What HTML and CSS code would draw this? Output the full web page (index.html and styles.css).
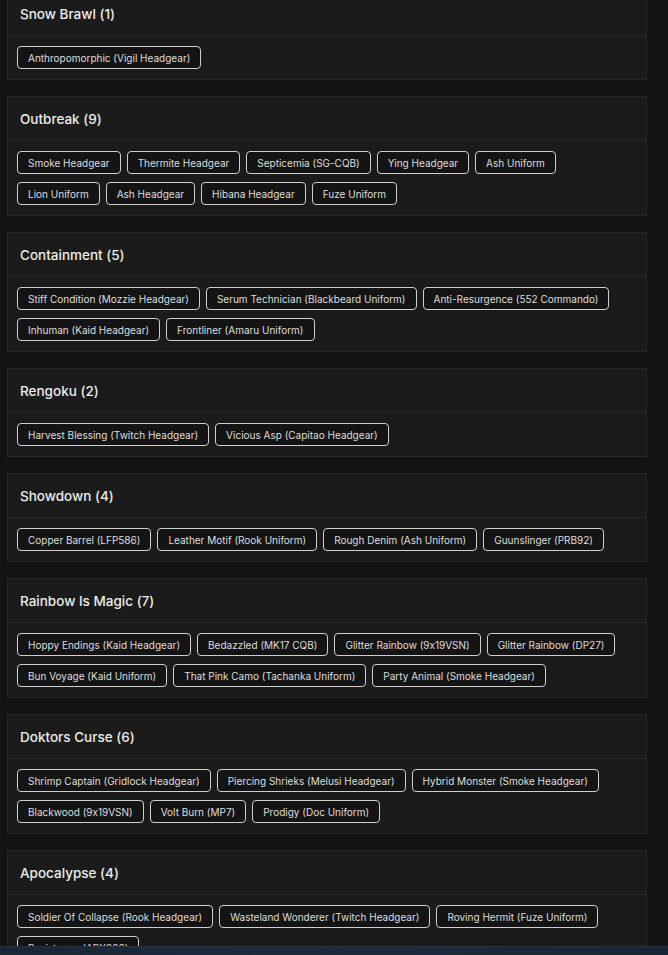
FILE: index.html
```html
<!DOCTYPE html>
<html lang="en">
<head>
    <meta charset="UTF-8">
    <meta name="viewport" content="width=device-width, initial-scale=1.0">
    <title>Event Collections</title>
    <link rel="stylesheet" href="styles.css">
</head>
<body>
    <div class="collections">
        <div class="event-card">
            <div class="event-header">Snow Brawl (1)</div>
            <div class="event-items">
                <span class="item-tag">Anthropomorphic (Vigil Headgear)</span>
            </div>
        </div>

        <div class="event-card">
            <div class="event-header">Outbreak (9)</div>
            <div class="event-items">
                <span class="item-tag">Smoke Headgear</span>
                <span class="item-tag">Thermite Headgear</span>
                <span class="item-tag">Septicemia (SG-CQB)</span>
                <span class="item-tag">Ying Headgear</span>
                <span class="item-tag">Ash Uniform</span>
                <span class="item-tag">Lion Uniform</span>
                <span class="item-tag">Ash Headgear</span>
                <span class="item-tag">Hibana Headgear</span>
                <span class="item-tag">Fuze Uniform</span>
            </div>
        </div>

        <div class="event-card">
            <div class="event-header">Containment (5)</div>
            <div class="event-items">
                <span class="item-tag">Stiff Condition (Mozzie Headgear)</span>
                <span class="item-tag">Serum Technician (Blackbeard Uniform)</span>
                <span class="item-tag">Anti-Resurgence (552 Commando)</span>
                <span class="item-tag">Inhuman (Kaid Headgear)</span>
                <span class="item-tag">Frontliner (Amaru Uniform)</span>
            </div>
        </div>

        <div class="event-card">
            <div class="event-header">Rengoku (2)</div>
            <div class="event-items">
                <span class="item-tag">Harvest Blessing (Twitch Headgear)</span>
                <span class="item-tag">Vicious Asp (Capitao Headgear)</span>
            </div>
        </div>

        <div class="event-card">
            <div class="event-header">Showdown (4)</div>
            <div class="event-items">
                <span class="item-tag">Copper Barrel (LFP586)</span>
                <span class="item-tag">Leather Motif (Rook Uniform)</span>
                <span class="item-tag">Rough Denim (Ash Uniform)</span>
                <span class="item-tag">Guunslinger (PRB92)</span>
            </div>
        </div>

        <div class="event-card">
            <div class="event-header">Rainbow Is Magic (7)</div>
            <div class="event-items">
                <span class="item-tag">Hoppy Endings (Kaid Headgear)</span>
                <span class="item-tag">Bedazzled (MK17 CQB)</span>
                <span class="item-tag">Glitter Rainbow (9x19VSN)</span>
                <span class="item-tag">Glitter Rainbow (DP27)</span>
                <span class="item-tag">Bun Voyage (Kaid Uniform)</span>
                <span class="item-tag">That Pink Camo (Tachanka Uniform)</span>
                <span class="item-tag">Party Animal (Smoke Headgear)</span>
            </div>
        </div>

        <div class="event-card">
            <div class="event-header">Doktors Curse (6)</div>
            <div class="event-items">
                <span class="item-tag">Shrimp Captain (Gridlock Headgear)</span>
                <span class="item-tag">Piercing Shrieks (Melusi Headgear)</span>
                <span class="item-tag">Hybrid Monster (Smoke Headgear)</span>
                <span class="item-tag">Blackwood (9x19VSN)</span>
                <span class="item-tag">Volt Burn (MP7)</span>
                <span class="item-tag">Prodigy (Doc Uniform)</span>
            </div>
        </div>

        <div class="event-card">
            <div class="event-header">Apocalypse (4)</div>
            <div class="event-items">
                <span class="item-tag">Soldier Of Collapse (Rook Headgear)</span>
                <span class="item-tag">Wasteland Wonderer (Twitch Headgear)</span>
                <span class="item-tag">Roving Hermit (Fuze Uniform)</span>
                <span class="item-tag">Resistance (ARX200)</span>
            </div>
        </div>
    </div>

    <div class="bottom-bar"></div>
</body>
</html>
```

FILE: styles.css
```css
body {
    margin: 0;
    background: #131313;
    color: #e4e4e4;
    font-family: Inter, "Noto Sans", sans-serif;
    font-feature-settings: "calt" 0;
    overflow: hidden;
}
.collections {
    width: 640px;
    margin: -9px 0 0 7px;
    display: flex;
    flex-direction: column;
    gap: 16px;
}
.event-card {
    background: #1b1b1b;
    border: 1px solid #282828;
}
.event-header {
    height: 43px;
    display: flex;
    align-items: center;
    padding: 0 12px;
    border-bottom: 1px solid #282828;
    font-size: 13.5px;
    font-weight: 500;
    color: #ececec;
}
.event-items {
    display: flex;
    flex-wrap: wrap;
    column-gap: 6px;
    row-gap: 8px;
    padding: 10px 9px;
}
.item-tag {
    height: 23px;
    box-sizing: border-box;
    display: inline-flex;
    align-items: center;
    padding: 0 10px;
    border: 1px solid #cfcfcf;
    border-radius: 4px;
    background: #141414;
    font-size: 10px;
    color: #dedede;
    white-space: nowrap;
}
.bottom-bar {
    position: fixed;
    left: 0;
    right: 0;
    bottom: 0;
    height: 8px;
    background: linear-gradient(to right, #1b2636, #1f2b3d 50%, #1a2433);
    border-top: 1px solid #243246;
}
```
